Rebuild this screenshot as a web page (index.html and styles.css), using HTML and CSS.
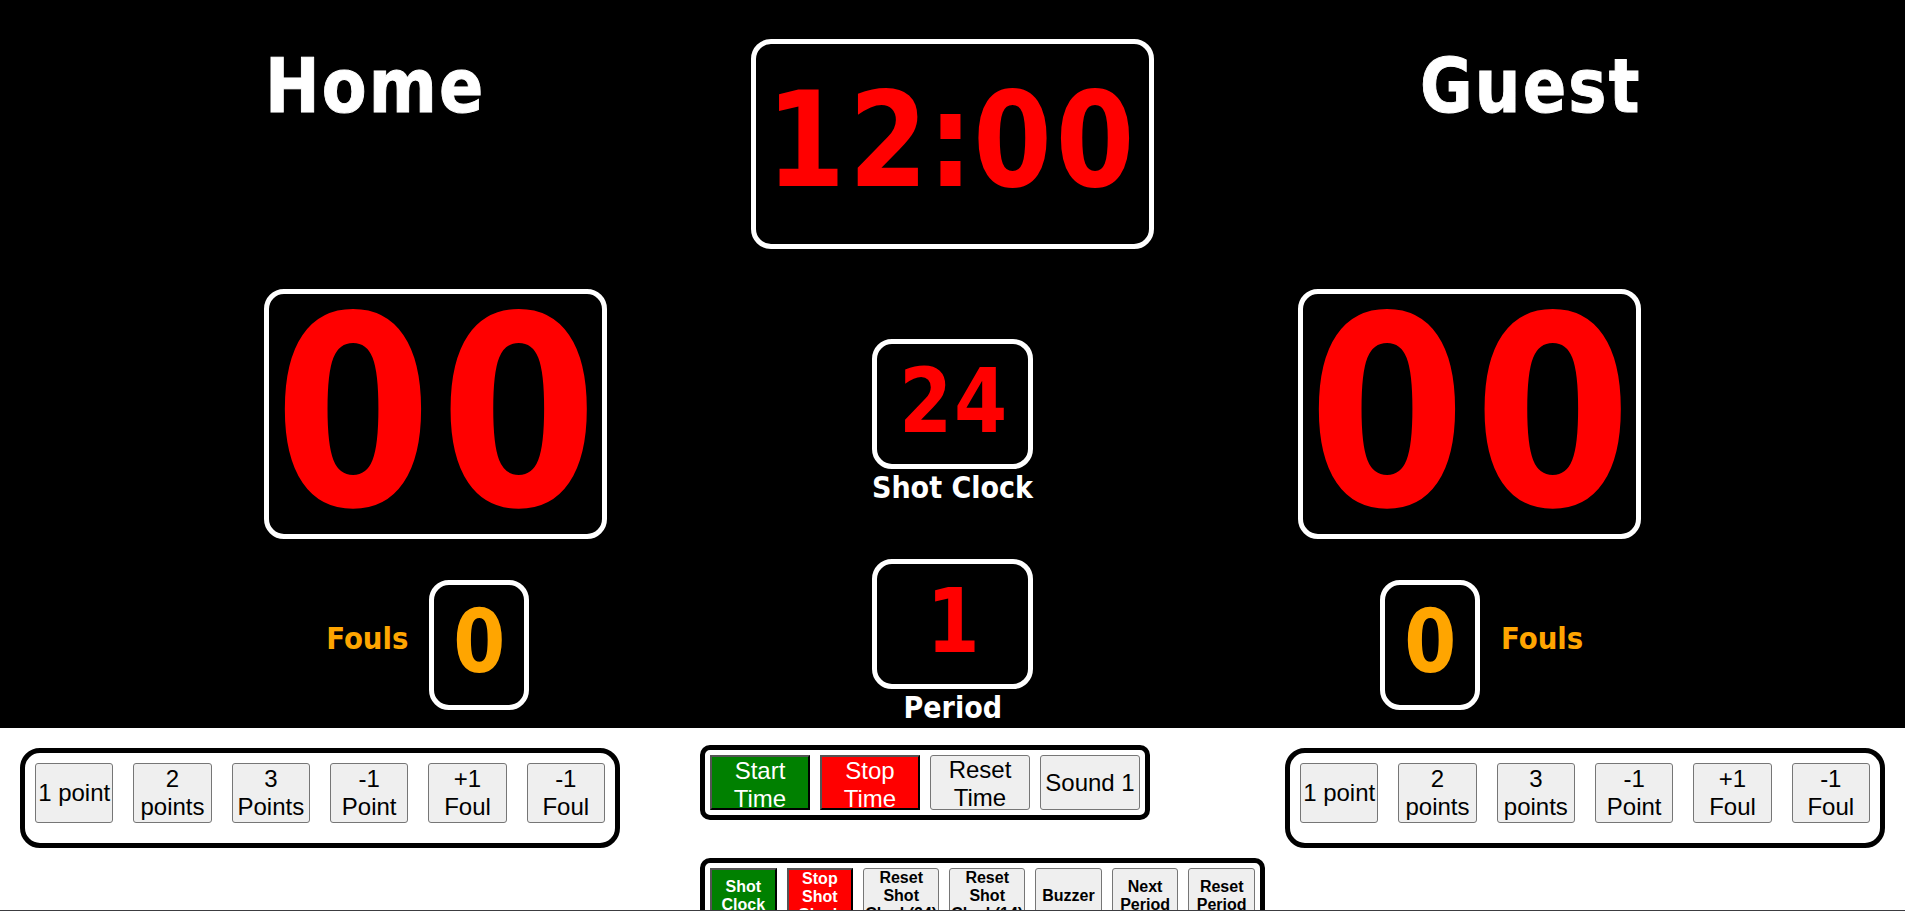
FILE: index.html
```
<!DOCTYPE html>
<html lang="en">
<head>
<meta charset="utf-8">
<title>Basketball Scoreboard</title>
<link rel="stylesheet" href="styles.css">
</head>
<body>
<main class="page">
  <section class="board">
    <div class="team home">
      <h1 class="name"><span>Home</span></h1>
      <div class="box score"><span>00</span></div>
      <div class="fouls">
        <span class="fouls-label">Fouls</span>
        <div class="box foul-count"><span>0</span></div>
      </div>
    </div>
    <div class="center">
      <div class="box clock"><span>12<i class="colon">:</i>00</span></div>
      <div class="box small"><span>24</span></div>
      <div class="label">Shot Clock</div>
      <div class="box small period"><span>1</span></div>
      <div class="label">Period</div>
    </div>
    <div class="team guest">
      <h1 class="name"><span>Guest</span></h1>
      <div class="box score"><span>00</span></div>
      <div class="fouls">
        <div class="box foul-count"><span>0</span></div>
        <span class="fouls-label">Fouls</span>
      </div>
    </div>
  </section>
  <section class="controls">
    <div class="team-controls">
      <button>1 point</button><button>2 points</button><button>3 Points</button><button>-1 Point</button><button>+1 Foul</button><button>-1<br>Foul</button>
    </div>
    <div class="game-controls">
      <div class="time-controls">
        <button class="start">Start Time</button><button class="stop">Stop Time</button><button>Reset Time</button><button>Sound 1</button>
      </div>
      <div class="shot-controls">
        <button class="start">Shot Clock</button><button class="stop">Stop Shot Clock</button><button class="wide">Reset Shot Clock(24)</button><button class="wide">Reset Shot Clock(14)</button><button>Buzzer</button><button>Next Period</button><button>Reset Period</button>
      </div>
    </div>
    <div class="team-controls">
      <button>1 point</button><button>2 points</button><button>3 points</button><button>-1 Point</button><button>+1 Foul</button><button>-1<br>Foul</button>
    </div>
  </section>
</main>
</body>
</html>
```
FILE: styles.css
```
* { box-sizing: border-box; }
body { margin: 0; background: #fff; overflow: hidden; }
.page { height: 911px; overflow: hidden; display: flex; flex-direction: column; border-bottom: 1px solid #3c3c40; }
.board {
  flex: none; height: 728px; background: #000; color: #fff;
  display: flex; justify-content: space-between; padding: 0 264px;
  font-family: "DejaVu Sans", sans-serif; font-weight: bold;
}
.box { border: 5px solid #fff; border-radius: 20px; color: red; display: flex; justify-content: center; line-height: 1; white-space: nowrap; }
.box span { display: block; flex: none; }
.team { width: 343px; display: flex; flex-direction: column; }
.name { margin: 0; height: 289px; padding-top: 49px; font-size: 75.5px; line-height: 1; display: flex; -webkit-text-stroke: 1px #fff; }
.name span { transform: scaleX(.865); transform-origin: left; letter-spacing: 2.5px; white-space: nowrap; }
.home .name { padding-left: 1px; }
.guest .name { justify-content: flex-end; }
.guest .name span { transform: scaleX(.85); transform-origin: right; }
.score { height: 250px; font-size: 264px; }
.score span { transform: scaleX(.86); letter-spacing: 9px; margin: -12px -9px 0 0; }
.fouls { margin-top: 41px; display: flex; align-items: flex-start; gap: 20px; }
.home .fouls { justify-content: flex-end; padding-right: 78px; }
.guest .fouls { padding-left: 82px; }
.foul-count { width: 100px; height: 130px; color: orange; font-size: 87px; }
.foul-count span { transform: scaleX(.86); margin-top: 14px; }
.fouls-label { color: orange; font-size: 30px; line-height: 30px; margin-top: 44px; margin-right: 1px; transform: scaleX(.92); transform-origin: right; }
.guest .fouls-label { transform-origin: left; margin-left: 1px; }
.center { width: 403px; padding-top: 39px; display: flex; flex-direction: column; align-items: center; }
.clock { width: 403px; height: 210px; flex: none; font-size: 132px; }
.clock span { transform: scaleX(.86); letter-spacing: 4px; margin: 30px 0 0 0; }
.colon { font-style: normal; margin: 0 -4px; }
.small { width: 161px; height: 130px; flex: none; margin-top: 90px; font-size: 89px; }
.small span { transform: scaleX(.86); letter-spacing: 2px; margin: 13px -2px 0 0; }
.label { font-size: 30px; line-height: 30px; height: 30px; margin-top: 4px; transform: scaleX(.9); white-space: nowrap; }
.small.period { margin-top: 56px; }

.controls { flex: none; display: flex; align-items: flex-start; padding: 17px 20px 0; }
.controls button { font-family: "Liberation Sans", Arial, sans-serif; font-size: 24px; line-height: 28px; color: #000; background: #efefef; border: 1px solid #767676; border-radius: 3px; padding: 0 1px; margin: 0; }
.team-controls { width: 600px; height: 100px; flex: none; margin-top: 3px; border: 5px solid #000; border-radius: 20px; padding: 10px; display: flex; gap: 20px; }
.team-controls button { flex: 1 1 0; min-width: 0; height: 60px; padding: 0; }
.game-controls { width: 585px; margin: 0 0 0 80px; flex: none; display: flex; flex-direction: column; align-items: flex-start; gap: 38px; }
.time-controls, .shot-controls { border: 5px solid #000; border-radius: 10px; padding: 5px; display: flex; gap: 10px; }
.time-controls button { width: 100px; height: 55px; }
.shot-controls { width: 565px; height: 75px; }
.shot-controls button { flex: none; width: 66.6px; height: 55px; font-size: 16px; line-height: 18px; font-weight: bold; padding: 0; }
.shot-controls .wide { width: 76px; }
.controls .start, .controls .stop { color: #fff; background: green; border: 2px outset #000; border-radius: 0; padding: 0; }
.controls .stop { background: red; }
```
